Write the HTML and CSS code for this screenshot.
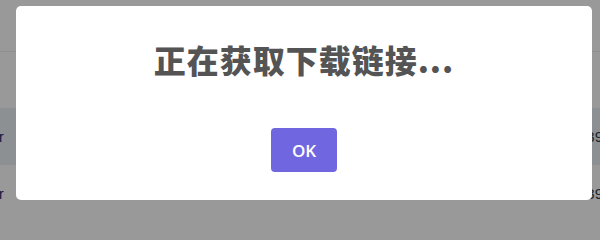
FILE: index.html
```html
<!DOCTYPE html>
<html lang="zh-CN">
<head>
<meta charset="utf-8">
<title>正在获取下载链接...</title>
<link rel="stylesheet" href="styles.css">
</head>
<body>
<div class="page">
  <div class="page-head"></div>
  <div class="row"></div>
  <div class="row row-striped">
    <span class="cell-left">r</span>
    <span class="cell-right">39</span>
  </div>
  <div class="row row-last">
    <span class="cell-left">r</span>
    <span class="cell-right">39</span>
  </div>
</div>
<div class="overlay">
  <div class="popup" role="dialog">
    <h2 class="popup-title">正在获取下载链接...</h2>
    <div class="popup-actions">
      <button class="popup-confirm" type="button">OK</button>
    </div>
  </div>
</div>
</body>
</html>
```
FILE: styles.css
```css
html, body {
  margin: 0;
  padding: 0;
  height: 100%;
  overflow: hidden;
  background: #ffffff;
  font-family: "Liberation Sans", "Noto Sans", Arial, sans-serif;
}

.page {
  display: flex;
  flex-direction: column;
}

.page-head {
  height: 51px;
  border-bottom: 1px solid #eeeeee;
}

.row {
  height: 56px;
  display: flex;
  align-items: center;
  justify-content: space-between;
  font-size: 14px;
}

.row-striped {
  height: 57px;
  background: #ebf0f4;
}

.row-last {
  height: 57px;
}

.cell-left {
  color: #14256b;
  margin-left: -1px;
}

.cell-right {
  color: #37404a;
  margin-right: -3px;
  font-size: 15px;
}

.overlay {
  position: fixed;
  inset: 0;
  background: rgba(0, 0, 0, 0.4);
  display: flex;
  align-items: flex-start;
  justify-content: flex-start;
  padding: 6px 8px 11px 16px;
  box-sizing: border-box;
}

.popup {
  width: 576px;
  height: 194px;
  background: #ffffff;
  border-radius: 5px;
  box-sizing: border-box;
  display: flex;
  flex-direction: column;
  align-items: center;
}

.popup-title {
  margin: 0;
  padding-top: 34px;
  font-family: "Noto Sans CJK SC", "Noto Sans", sans-serif;
  font-size: 32px;
  line-height: 38px;
  letter-spacing: 1px;
  font-weight: 900;
  color: #545454;
  text-align: center;
}

.popup-actions {
  margin-top: 50px;
  display: flex;
  justify-content: center;
}

.popup-confirm {
  width: 66px;
  height: 44px;
  border: 0;
  border-radius: 4px;
  background: #7066e0;
  color: #ffffff;
  font-family: "Open Sans", "Noto Sans", sans-serif;
  font-size: 17px;
  font-weight: 600;
  padding: 0;
  cursor: pointer;
}
```
